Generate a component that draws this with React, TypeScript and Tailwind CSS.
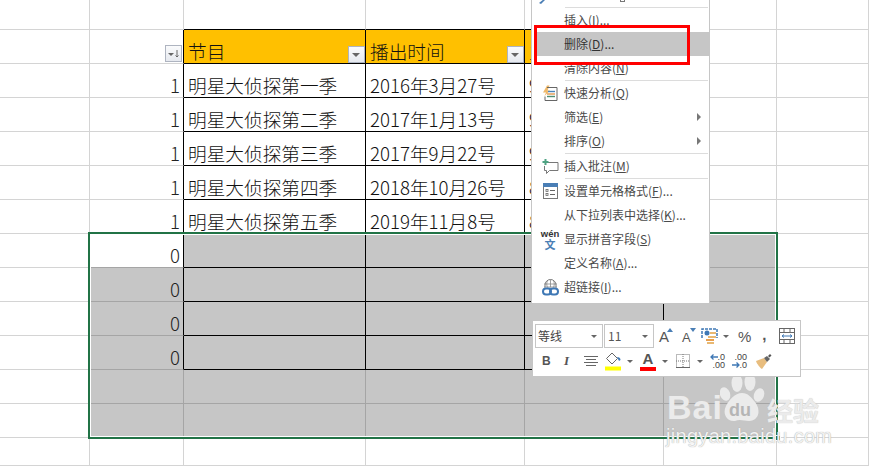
import React from "react";

const rows: [string, string, string][] = [
  ["明星大侦探第一季", "2016年3月27号", "9"],
  ["明星大侦探第二季", "2017年1月13号", "9"],
  ["明星大侦探第三季", "2017年9月22号", "9"],
  ["明星大侦探第四季", "2018年10月26号", "8"],
  ["明星大侦探第五季", "2019年11月8号", "8"],
];

function Filter({ sort }: { sort?: boolean }) {
  return (
    <span className="shrink-0 w-[17px] h-[17px] border border-[#aeb4c0] bg-gradient-to-b from-[#fafbfc] to-[#e6e9ef] flex items-center justify-center">
      <svg width="15" height="15" viewBox="0 0 15 15">
        {sort ? (
          <>
            <path d="M2 7h6l-3 3z" fill="#666" />
            <path d="M11 4v7M9.5 9.5L11 11l1.5-1.5" stroke="#666" strokeWidth="1" fill="none" />
          </>
        ) : (
          <path d="M3 6h8l-4 4z" fill="#666" />
        )}
      </svg>
    </span>
  );
}

function cellClass(r: number, c: number) {
  const selected = r >= 7 && r <= 12 && c >= 1 && c <= 5;
  const active = r === 7 && c === 1;
  const header = r === 1 && c >= 2 && c <= 4;
  const blackRight = r >= 1 && r <= 10 && c >= 1 && c <= 4;
  const blackBottom = r <= 10 && c >= 2 && c <= 4;
  const bg = active ? "bg-white" : selected ? "bg-[#c6c6c6]" : header ? "bg-[#ffc000]" : "bg-white";
  const br = blackRight ? "border-r-black" : selected ? "border-r-[#a5a5a5]" : "border-r-[#d4d4d4]";
  const bb = blackBottom ? "border-b-black" : selected ? "border-b-[#a5a5a5]" : "border-b-[#d4d4d4]";
  return `min-w-0 overflow-hidden border-r border-b flex items-end ${bg} ${br} ${bb}`;
}

function cellContent(r: number, c: number) {
  if (r === 1 && c === 1)
    return (
      <div className="w-full flex justify-end pr-[1px] pb-[1px]">
        <Filter sort />
      </div>
    );
  if (r === 1 && c === 2)
    return (
      <div className="w-full flex justify-between items-end pl-[4px] text-[#111]">
        <span className="leading-[24px]">节目</span>
        <Filter />
      </div>
    );
  if (r === 1 && c === 3)
    return (
      <div className="w-full flex justify-between items-end pl-[4px] text-[#111]">
        <span className="leading-[24px]">播出时间</span>
        <Filter />
      </div>
    );
  if (r === 1 && c === 4) return <span className="pl-[4px] leading-[24px] text-[#111]">主持人</span>;
  if (r >= 2 && r <= 6) {
    const d = rows[r - 2];
    if (c === 1) return <span className="w-full text-right pr-[3px] leading-[24px] text-[#222]">1</span>;
    if (c >= 2 && c <= 4)
      return <span className="pl-[4px] leading-[24px] whitespace-nowrap text-[#111]">{d[c - 2]}</span>;
  }
  if (r >= 7 && r <= 10 && c === 1)
    return <span className="w-full text-right pr-[3px] leading-[24px] text-[#222]">0</span>;
  return null;
}

function MenuItem({
  label,
  acc,
  tail,
  icon,
  arrow,
  hot,
}: {
  label: string;
  acc: string;
  tail?: string;
  icon?: React.ReactNode;
  arrow?: boolean;
  hot?: boolean;
}) {
  return (
    <div className={`h-6 flex items-center ml-[4px] ${hot ? "bg-[#c6c6c6] text-[#333]" : "text-[#4a4a4a]"}`}>
      <span className="w-7 h-6 flex items-center justify-center shrink-0">{icon}</span>
      <span className="whitespace-nowrap">
        {label}(<span className="underline">{acc}</span>){tail}
      </span>
      {arrow && (
        <span className="ml-auto mr-[8px] w-0 h-0 border-y-[4px] border-y-transparent border-l-[4px] border-l-[#777]" />
      )}
    </div>
  );
}

function Sep({ wide }: { wide?: boolean }) {
  return <div className={`h-px bg-[#dcdcdc] ml-[33px] mr-px ${wide ? "my-0" : ""}`} />;
}

const BoltIcon = (
  <svg width="16" height="16" viewBox="0 0 16 16">
    <path d="M5 0.5L1 7.5h3L2.5 11 8 5.5H5.5L7.5 0.5z" fill="#efb96b" />
    <path d="M5 2.5h10v13H3v-4" fill="none" stroke="#666" strokeWidth="1" />
    <path d="M6 6.5h7" stroke="#4a84bd" strokeWidth="1.4" />
    <path d="M5 9h8" stroke="#e39a4f" strokeWidth="1.4" />
    <path d="M5 11.5h8" stroke="#4f8e73" strokeWidth="1.4" />
  </svg>
);

const CommentIcon = (
  <svg width="17" height="17" viewBox="0 0 17 17">
    <path d="M4 4.5h12v8H7.5L4.5 15.5v-3H2.5V8" fill="none" stroke="#777" strokeWidth="1" />
    <path d="M3.5 1v6M0.5 4h6" stroke="#4fa383" strokeWidth="2" />
  </svg>
);

const FormatIcon = (
  <svg width="15" height="16" viewBox="0 0 15 16">
    <rect x="0.5" y="0.5" width="14" height="15" fill="#fff" stroke="#777" />
    <rect x="0" y="0" width="15" height="4" fill="#4a7eb5" />
    <rect x="3" y="6.5" width="2" height="2" fill="none" stroke="#666" strokeWidth="0.8" />
    <rect x="3" y="10.5" width="2" height="2" fill="none" stroke="#666" strokeWidth="0.8" />
    <path d="M7 7.5h5M7 11.5h5" stroke="#666" strokeWidth="1" />
  </svg>
);

const WenIcon = (
  <span className="flex flex-col items-center leading-none text-[#333] font-['Liberation_Sans',sans-serif]">
    <span className="text-[9.5px] leading-[10px] font-bold tracking-[0px]">wén</span>
    <span className="text-[11px] leading-[11px] font-bold text-[#4a7eb5] font-['Noto_Sans_CJK_SC',sans-serif]">文</span>
  </span>
);

const LinkIcon = (
  <svg width="17" height="19" viewBox="0 0 17 19">
    <path d="M3 9.5V7a5.5 5.5 0 0 1 11 0v2.5" fill="none" stroke="#777" strokeWidth="1" />
    <path d="M2 6h13M2 9h13M8.5 1.500v8M5.5 2.500c-1 2-1 5 0 7M11.500 2.500c1 2 1 5 0 7" stroke="#888" strokeWidth="0.8" fill="none" />
    <rect x="1" y="10.500" width="8" height="6" rx="3" fill="none" stroke="#3f78b5" strokeWidth="2" />
    <rect x="8" y="10.500" width="8" height="6" rx="3" fill="none" stroke="#3f78b5" strokeWidth="2" />
  </svg>
);

function Caret({ cls }: { cls: string }) {
  return <span className={`w-0 h-0 border-x-[3px] border-x-transparent border-t-[3px] border-t-[#666] shrink-0 ${cls}`} />;
}

function FontA({ up }: { up: boolean }) {
  return (
    <span className="relative w-[14px] h-[16px] flex items-end shrink-0">
      <span className={`text-[#555] font-['Liberation_Sans',sans-serif] leading-none ${up ? "text-[15px]" : "text-[13px]"}`}>A</span>
      <svg className="absolute right-0 top-0" width="6" height="5" viewBox="0 0 6 5">
        <path d={up ? "M0 4h6L3 0z" : "M0 0h6L3 4z"} fill="#4a7eb5" />
      </svg>
    </span>
  );
}

function MiniToolbar() {
  return (
    <div className="absolute left-[532px] top-[320px] w-[269px] h-[57px] bg-white border border-[#c6c6c6] pl-[2px] pt-[3px] font-['Noto_Sans_CJK_SC',sans-serif] z-20">
      <div className="flex items-center h-[24px]">
        <div className="w-[68px] h-[24px] border border-[#c6c6c6] flex items-center justify-between pl-[2px] pr-[5px] text-[12px] text-[#444]">
          <span>等线</span>
          <Caret cls="" />
        </div>
        <div className="w-[50px] h-[24px] ml-px border border-[#c6c6c6] flex items-center justify-between pl-[3px] pr-[5px] text-[12px] text-[#555]">
          <span>11</span>
          <Caret cls="" />
        </div>
        <span className="ml-[5px]">
          <FontA up />
        </span>
        <span className="ml-[9px]">
          <FontA up={false} />
        </span>
        <svg className="ml-[5px] shrink-0" width="17" height="17" viewBox="0 0 17 17">
          <path d="M1 10V1h15v9" fill="none" stroke="#3f78b5" strokeWidth="1.500" strokeDasharray="3 1" />
          <circle cx="6" cy="5" r="2.500" fill="#3f78b5" />
          <rect x="9" y="4" width="6" height="2" fill="#e9b872" />
          <rect x="7" y="8" width="8" height="2" fill="#e9b872" />
          <rect x="5" y="11" width="8" height="2" fill="#e9a04f" />
          <rect x="6" y="14" width="7" height="2" fill="#e9b872" />
        </svg>
        <Caret cls="ml-[5px]" />
        <span className="ml-[9px] text-[15px] leading-none text-[#555] font-['Liberation_Sans',sans-serif]">%</span>
        <span className="ml-[11px] text-[15px] leading-none font-bold text-[#555] font-['Liberation_Sans',sans-serif] -translate-y-[2px]">,</span>
        <svg className="ml-[12px] shrink-0" width="16" height="16" viewBox="0 0 16 16">
          <rect x="0.500" y="0.500" width="15" height="15" fill="#fff" stroke="#666" />
          <path d="M0.500 4.500h15M0.500 11.500h15M5 0.500v4M11 0.500v4M5 11.500v4M11 11.500v4" stroke="#666" strokeWidth="1" />
          <path d="M3 8h10M3 8l2-1.500M3 8l2 1.500M13 8l-2-1.500M13 8l-2 1.500" stroke="#3f78b5" strokeWidth="1" fill="none" />
        </svg>
      </div>
      <div className="flex items-center h-[24px] mt-[1px]">
        <span className="ml-[7px] w-[8px] text-[12px] font-bold text-[#555] font-['Liberation_Sans',sans-serif]">B</span>
        <span className="ml-[14px] w-[7px] text-[13px] italic font-bold text-[#555] font-['Liberation_Serif',serif]">I</span>
        <svg className="ml-[13px] shrink-0" width="14" height="12" viewBox="0 0 14 12">
          <path d="M0 1.500h14M2 4.500h10M0 7.500h14M2 10.500h10" stroke="#666" strokeWidth="1" />
        </svg>
        <svg className="ml-[7px] shrink-0" width="16" height="19" viewBox="0 0 16 19">
          <path d="M7 1l5.500 5.500L7 12 1.500 6.500z" fill="#fff" stroke="#666" strokeWidth="1" />
          <path d="M12 5c2 0 3.500 1 3.500 3l-1.500 1z" fill="#3f78b5" />
          <rect x="0" y="14.500" width="16" height="4" fill="#ffff00" />
        </svg>
        <Caret cls="ml-[6px]" />
        <span className="ml-[7px] w-[16px] h-[19px] flex flex-col items-center shrink-0">
          <span className="text-[15px] leading-[14px] font-bold text-[#555] font-['Liberation_Sans',sans-serif]">A</span>
          <span className="w-[16px] h-[4px] mt-[1px] bg-[#ff0000]" />
        </span>
        <Caret cls="ml-[6px]" />
        <svg className="ml-[8px] shrink-0" width="14" height="14" viewBox="0 0 14 14">
          <path d="M0.500 0.500h13v13h-13zM7 0v14M0 7h14" fill="none" stroke="#777" strokeWidth="1" strokeDasharray="1 1" />
          <path d="M0 13.500h14" stroke="#666" strokeWidth="1" />
        </svg>
        <Caret cls="ml-[7px]" />
        <span className="ml-[7px] w-[15px] h-[16px] relative shrink-0 text-[#444] font-['Liberation_Sans',sans-serif] text-[9px] leading-[8px]">
          <svg className="absolute left-0 top-[1px]" width="8" height="6" viewBox="0 0 8 6">
            <path d="M8 3H1M3.500 0.500L1 3l2.500 2.500" stroke="#3f78b5" strokeWidth="1.300" fill="none" />
          </svg>
          <span className="absolute right-0 top-0">.0</span>
          <span className="absolute right-0 top-[8px]">.00</span>
        </span>
        <span className="ml-[7px] w-[15px] h-[16px] relative shrink-0 text-[#444] font-['Liberation_Sans',sans-serif] text-[9px] leading-[8px]">
          <span className="absolute right-0 top-0">.00</span>
          <svg className="absolute left-0 top-[9px]" width="8" height="6" viewBox="0 0 8 6">
            <path d="M0 3h7M4.500 0.500L7 3 4.500 5.500" stroke="#3f78b5" strokeWidth="1.300" fill="none" />
          </svg>
          <span className="absolute right-0 top-[8px]">.0</span>
        </span>
        <svg className="ml-[8px] shrink-0" width="17" height="16" viewBox="0 0 17 16">
          <path d="M1 8l8-3 3 4-5 7c-2-1-5-5-6-8z" fill="#e8bd7e" />
          <path d="M9 5l3-2 3 3-3 3z" fill="#666" />
          <path d="M13 3l2-2 1.500 1.500-2 2z" fill="#555" />
        </svg>
      </div>
    </div>
  );
}

function Watermark() {
  return (
    <div className="absolute left-[660px] top-[370px] w-[209px] h-[96px] z-10 pointer-events-none">
      <span className="absolute left-[7px] top-[20px] text-[34px] leading-[34px] font-bold text-[#ebebeb] tracking-[1px] font-['Liberation_Sans',sans-serif]">Bai</span>
      <svg className="absolute left-[60px] top-[0px]" width="50" height="55" viewBox="0 0 50 55">
        <ellipse cx="17" cy="13" rx="5.500" ry="9" fill="#ebebeb" />
        <ellipse cx="30" cy="12" rx="5.500" ry="9" fill="#ebebeb" />
        <ellipse cx="5" cy="24" rx="5" ry="7" fill="#ebebeb" transform="rotate(-20 5 24)" />
        <ellipse cx="39" cy="25" rx="5" ry="7" fill="#ebebeb" transform="rotate(20 39 25)" />
        <path d="M22 23c6 0 9 4 13 9 5 6 6 18-6 19-5 0-9-2-14 0-8 1-13-7-9-15 3-6 9-13 16-13z" fill="#ebebeb" />
      </svg>
      <span className="absolute left-[69px] top-[30px] text-[18px] leading-[20px] font-bold text-[#b5b5b5] font-['Liberation_Sans',sans-serif]">du</span>
      <span className="absolute left-[107px] top-[25px] text-[26px] leading-[30px] font-bold text-[#ebebeb] font-['Noto_Sans_CJK_SC',sans-serif] [text-shadow:0_0_1px_#bbb]">经验</span>
      <span className="absolute left-[6px] top-[54px] text-[20px] leading-[24px] text-[#f2f2f2] tracking-[0.3px] font-['Liberation_Sans',sans-serif] [text-shadow:0_0_1px_#999]">jingyan.baidu.com</span>
    </div>
  );
}

export default function App() {
  const rowIdx = Array.from({ length: 14 }, (_, i) => i);
  const colIdx = [0, 1, 2, 3, 4, 5, 6];
  return (
    <div className="relative w-[869px] h-[466px] overflow-hidden bg-white font-['Noto_Sans_CJK_SC',sans-serif]">
      <div className="grid grid-cols-[90px_94px_182px_159px_139px_113px_92px] grid-rows-[30px_repeat(12,34px)_28px] text-[18.67px] font-light">
        {rowIdx.map((r) =>
          colIdx.map((c) => (
            <div key={`${r}-${c}`} className={cellClass(r, c)}>
              {cellContent(r, c)}
            </div>
          ))
        )}
      </div>

      {/* selection frame */}
      <div className="absolute left-[88px] top-[232px] w-[690px] h-[207px] border-2 border-[#217346] shadow-[inset_0_0_0_1px_#fff] z-0" />
      <div className="absolute left-[775px] top-[435px] w-[6px] h-[6px] bg-[#217346] border border-white" />

      <Watermark />

      {/* context menu */}
      <div className="absolute left-[531px] top-[-2px] w-[179px] h-[306px] bg-white border border-[#c6c6c6] pt-[8px] text-[12px] z-20">
        <svg className="absolute left-[6px] top-0" width="8" height="5" viewBox="0 0 8 5">
          <path d="M1 4l5-4h2L3 5z" fill="#4a7eb5" />
        </svg>
        <span className="absolute left-[88px] top-0 w-[5px] h-[3px] border-b border-x border-[#777]" />
        <Sep />
        <MenuItem label="插入" acc="I" tail="..." />
        <MenuItem label="删除" acc="D" tail="..." hot />
        <MenuItem label="清除内容" acc="N" />
        <Sep />
        <MenuItem label="快速分析" acc="Q" icon={BoltIcon} />
        <MenuItem label="筛选" acc="E" arrow />
        <MenuItem label="排序" acc="O" arrow />
        <Sep />
        <MenuItem label="插入批注" acc="M" icon={CommentIcon} />
        <Sep />
        <MenuItem label="设置单元格格式" acc="F" tail="..." icon={FormatIcon} />
        <MenuItem label="从下拉列表中选择" acc="K" tail="..." />
        <MenuItem label="显示拼音字段" acc="S" icon={WenIcon} />
        <MenuItem label="定义名称" acc="A" tail="..." />
        <MenuItem label="超链接" acc="I" tail="..." icon={LinkIcon} />
      </div>

      {/* red annotation */}
      <div className="absolute left-[534px] top-[25px] w-[156px] h-[40px] border-[3px] border-[#ff0000] z-30" />

      <MiniToolbar />
    </div>
  );
}
